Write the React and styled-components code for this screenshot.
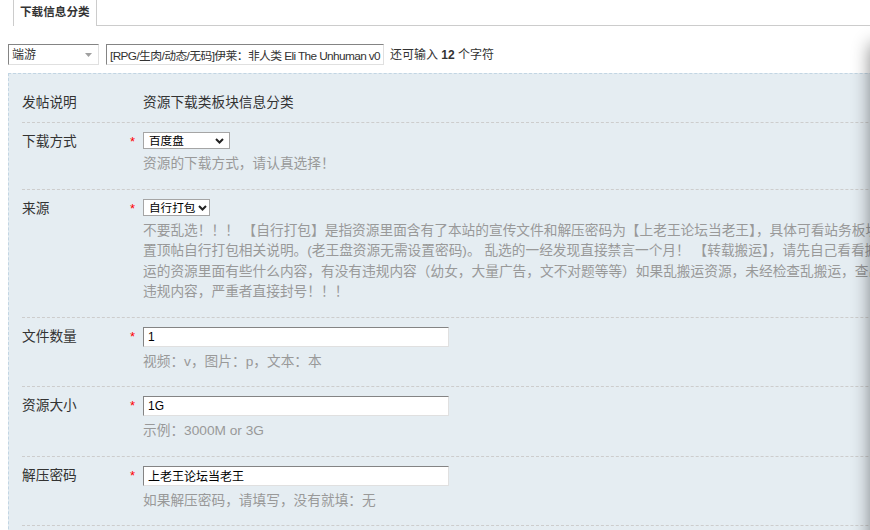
import React from 'react';
import styled, { createGlobalStyle } from 'styled-components';

const GlobalStyle = createGlobalStyle`
  html, body {
    margin: 0;
    padding: 0;
    overflow: hidden;
    background: #fff;
  }
  body {
    font: 12px/1.5 "Liberation Sans", "Noto Sans CJK SC", sans-serif;
    color: #333;
  }
`;

const Page = styled.div`
  width: 1060px;
  padding: 0 8px;
`;

/* tab strip */
const TabBar = styled.div`
  display: flex;
  height: 26px;
  padding-left: 5px;
`;

const Tab = styled.div`
  height: 26px;
  padding: 0 6px;
  border-left: 1px solid #ccc;
  border-right: 1px solid #ccc;
  background: #fff;
  font-size: 11.6px;
  font-weight: 700;
  line-height: 24px;
  color: #333;
`;

const TabFill = styled.div`
  flex: 1;
  height: 25px;
  border-bottom: 1px solid #ccc;
`;

/* subject line */
const TitleRow = styled.div`
  display: flex;
  align-items: center;
  margin-top: 18px;
  height: 21px;
`;

const Wrap = styled.span`
  position: relative;
  display: flex;
  width: max-content;
`;

const TypeSelect = styled.select`
  appearance: none;
  width: 91px;
  height: 21px;
  box-sizing: border-box;
  padding: 0 0 0 3px;
  border: 1px solid;
  border-color: #848484 #e0e0e0 #e0e0e0 #848484;
  background: #fff;
  font: 12px "Liberation Sans", "Noto Sans CJK SC", sans-serif;
  color: #333;
  outline: none;
`;

const Triangle = styled.svg`
  position: absolute;
  right: 7px;
  top: 9px;
  pointer-events: none;
`;

const SubjectInput = styled.input`
  width: 278px;
  height: 21px;
  box-sizing: border-box;
  margin-left: 7px;
  padding: 0 2px 0 3px;
  border: 1px solid;
  border-color: #848484 #e0e0e0 #e0e0e0 #848484;
  font: 11.8px "Liberation Sans", "Noto Sans CJK SC", sans-serif;
  letter-spacing: -0.6px;
  color: #333;
  outline: none;
`;

const Counter = styled.span`
  margin-left: 6px;
  font-size: 12px;
  color: #333;
  strong {
    font-weight: 700;
  }
`;

/* info panel */
const Panel = styled.div`
  margin-top: 8px;
  padding: 10px 0 0 13px;
  background: #e5edf2;
  border-top: 1px dashed #c2d5e3;
  border-left: 1px dashed #c2d5e3;
  min-height: 520px;
`;

const Row = styled.div`
  display: grid;
  grid-template-columns: 108px 13px 1fr;
  padding: 9px 0;
  border-bottom: 1px dashed #cdcdcd;
`;

const Label = styled.div`
  font-size: 13.7px;
  line-height: 20px;
  color: #333;
`;

const Req = styled.span`
  padding-top: 1px;
  font-size: 13px;
  line-height: 17px;
  color: #f00;
`;

const Field = styled.div`
  grid-column: 3;
  font-size: 13.7px;
  line-height: 20px;
  color: #333;
`;

const Hint = styled.div`
  margin: 5px 0;
  font-size: 13.7px;
  line-height: 20.5px;
  color: #999;
  white-space: nowrap;
`;

const Choice = styled.select`
  appearance: none;
  display: block;
  width: ${(p) => p.$w}px;
  height: 17px;
  box-sizing: border-box;
  padding: 0 0 0 5px;
  border: 1px solid #a5a5a5;
  background: #fff;
  font: 11.6px "Liberation Sans", "Noto Sans CJK SC", sans-serif;
  color: #000;
  outline: none;
`;

const Chevron = styled.svg`
  position: absolute;
  right: ${(p) => p.$r}px;
  top: 6px;
  pointer-events: none;
`;

const TextInput = styled.input`
  display: block;
  width: 306px;
  height: 20px;
  box-sizing: border-box;
  padding: 0 4px;
  border: 1px solid;
  border-color: #848484 #e0e0e0 #e0e0e0 #848484;
  background: #fff;
  font: 12px "Liberation Sans", "Noto Sans CJK SC", sans-serif;
  color: #000;
  outline: none;
`;

const EdgeShade = styled.div`
  position: fixed;
  top: 44px;
  right: -30px;
  width: 30px;
  height: 560px;
  background: #fff;
  box-shadow: 0 0 18px rgba(0, 0, 0, 0.45);
`;

const Dropdown = ({ width, right, value }) => (
  <Wrap>
    <Choice $w={width} value={value} onChange={() => {}}>
      <option>{value}</option>
    </Choice>
    <Chevron $r={right} width="9" height="6" viewBox="0 0 9 6">
      <path d="M1 1 L4.5 4.5 L8 1" fill="none" stroke="#222" strokeWidth="2" />
    </Chevron>
  </Wrap>
);

const InputRow = ({ label, value, hint }) => (
  <Row>
    <Label>{label}</Label>
    <Req>*</Req>
    <Field>
      <TextInput value={value} readOnly />
      <Hint>{hint}</Hint>
    </Field>
  </Row>
);

export default function App() {
  return (
    <>
      <GlobalStyle />
      <Page>
        <TabBar>
          <Tab>下载信息分类</Tab>
          <TabFill />
        </TabBar>

        <TitleRow>
          <Wrap>
            <TypeSelect value="端游" onChange={() => {}}>
              <option>端游</option>
            </TypeSelect>
            <Triangle width="7" height="4" viewBox="0 0 7 4">
              <path d="M0 0 H7 L3.5 4 Z" fill="#a0a0a0" />
            </Triangle>
          </Wrap>
          <SubjectInput value="[RPG/生肉/动态/无码]伊莱：非人类 Eli The Unhuman v0" readOnly />
          <Counter>
            还可输入 <strong>12</strong> 个字符
          </Counter>
        </TitleRow>

        <Panel>
          <Row>
            <Label>发帖说明</Label>
            <Field>资源下载类板块信息分类</Field>
          </Row>

          <Row>
            <Label>下载方式</Label>
            <Req>*</Req>
            <Field>
              <Dropdown width={87} right={6} value="百度盘" />
              <Hint>资源的下载方式，请认真选择！</Hint>
            </Field>
          </Row>

          <Row>
            <Label>来源</Label>
            <Req>*</Req>
            <Field>
              <Dropdown width={67} right={3} value="自行打包" />
              <Hint>
                不要乱选！！！ 【自行打包】是指资源里面含有了本站的宣传文件和解压密码为【上老王论坛当老王】，具体可看站务板块
                <br />
                置顶帖自行打包相关说明。(老王盘资源无需设置密码)。 乱选的一经发现直接禁言一个月！ 【转载搬运】，请先自己看看搬
                <br />
                运的资源里面有些什么内容，有没有违规内容（幼女，大量广告，文不对题等等）如果乱搬运资源，未经检查乱搬运，查出
                <br />
                违规内容，严重者直接封号！！！
              </Hint>
            </Field>
          </Row>

          <InputRow label="文件数量" value="1" hint="视频：v，图片：p，文本：本" />
          <InputRow label="资源大小" value="1G" hint="示例：3000M or 3G" />
          <InputRow label="解压密码" value="上老王论坛当老王" hint="如果解压密码，请填写，没有就填：无" />
        </Panel>
      </Page>
      <EdgeShade />
    </>
  );
}
